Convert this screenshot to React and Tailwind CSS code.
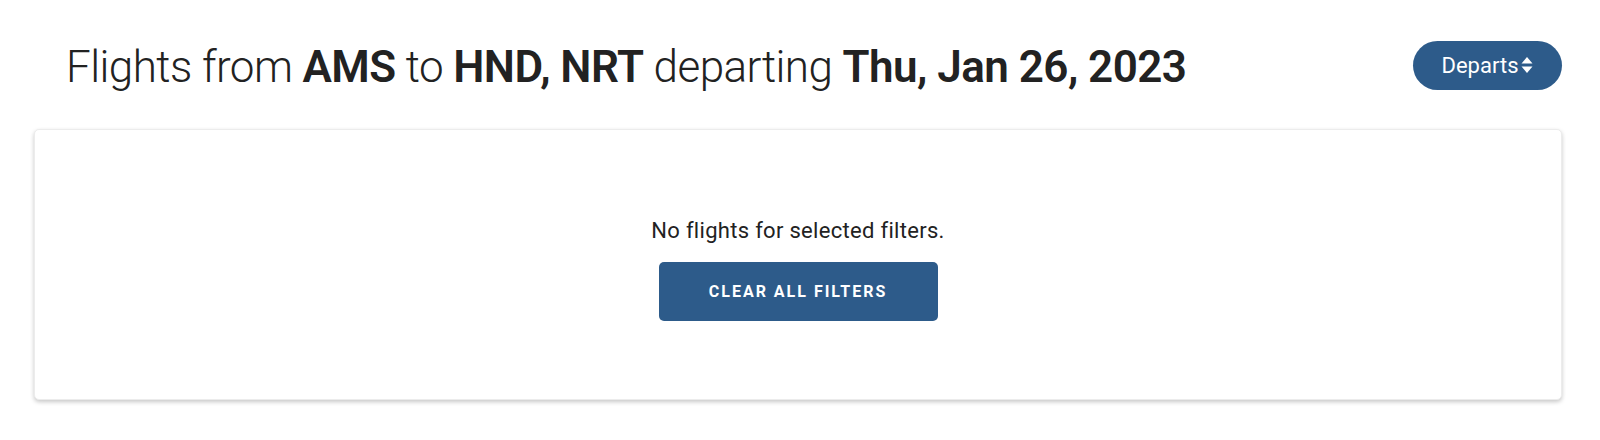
import React from "react";

const SortIcon = () => (
    <svg width="12" height="18" viewBox="0 0 12 18" className="ml-[3px]" fill="currentColor">
        <path d="M6 1 L11.5 7.5 H0.5 Z" />
        <path d="M6 17 L11.5 10.5 H0.5 Z" />
    </svg>
);

const App = () => {
    return (
        <div
            className="w-[1600px] h-[440px] bg-white text-[#222] pl-[34px] pr-[38px] pt-[40px]"
            style={{ fontFamily: "Roboto, 'Liberation Sans', sans-serif" }}
        >
            {/* header */}
            <div className="flex items-center justify-between h-[50px]">
                <h1 className="pl-[32px] pt-[3px] text-[44px] font-light tracking-[-0.55px] leading-none whitespace-nowrap">
                    Flights from <span className="font-semibold">AMS</span> to{" "}
                    <span className="font-semibold">HND, NRT</span> departing{" "}
                    <span className="font-semibold">Thu, Jan 26, 2023</span>
                </h1>
                <button className="flex items-center justify-center w-[149px] h-[49px] rounded-full bg-[#2d5b8a] text-white text-[22px]">
                    Departs
                    <SortIcon />
                </button>
            </div>

            {/* results */}
            <div className="mt-[39px] h-[271px] rounded-[5px] bg-white border border-[#ececec] shadow-[0_2px_4px_rgba(0,0,0,0.22)] flex flex-col items-center justify-center">
                <p className="text-[22px] text-[#222] mt-[6px] tracking-[0.3px]">No flights for selected filters.</p>
                <button className="mt-[15px] w-[279px] h-[59px] rounded-[5px] bg-[#2d5b8a] text-white text-[16px] font-bold tracking-[2px] uppercase">
                    Clear all filters
                </button>
            </div>
        </div>
    );
};

export default App;
